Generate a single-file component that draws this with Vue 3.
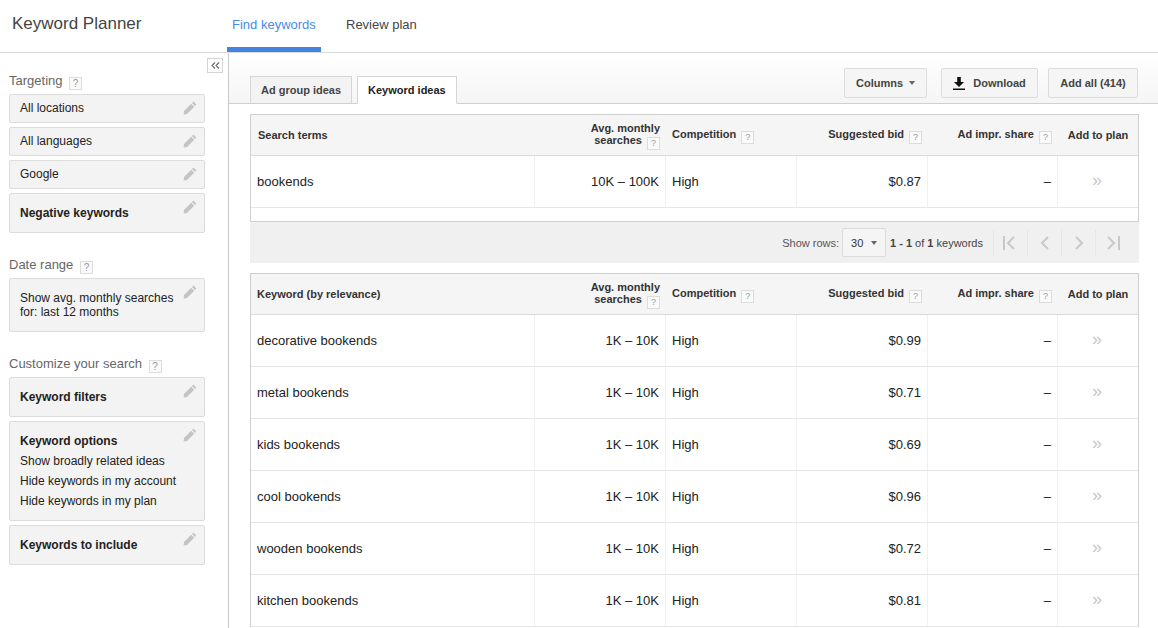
<template>
  <div class="page">
    <header class="topbar">
      <div class="brand">Keyword Planner</div>
      <nav class="nav">
        <a class="nav-item active">Find keywords</a>
        <a class="nav-item">Review plan</a>
      </nav>
    </header>

    <div class="body">
      <aside class="sidebar">
        <button class="collapse" aria-label="Collapse">
          <svg width="9" height="7" viewBox="0 0 9 7"><path d="M4 .5 1 3.5 4 6.5M8 .5 5 3.5 8 6.5" fill="none" stroke="#666" stroke-width="1.1"/></svg>
        </button>

        <div v-for="group in groups" :key="group.label" class="group">
          <div class="group-label">{{ group.label }} <span class="help">?</span></div>
          <div
            v-for="box in group.boxes"
            :key="box.title || box.text"
            class="box"
            :class="box.kind"
          >
            <strong v-if="box.title">{{ box.title }}</strong>
            <span v-if="box.text">{{ box.text }}</span>
            <span v-for="line in box.lines" :key="line" class="line">{{ line }}</span>
            <svg class="pencil" width="14" height="14" viewBox="0 0 14 14"><path d="M10.4.6 13.4 3.6 12 5 9 2ZM8.2 2.8l3 3L4 13 .6 13.4 1 10Z" fill="#c4c4c4"/></svg>
          </div>
        </div>
      </aside>

      <main class="content">
        <div class="tabbar">
          <div class="tabs">
            <div class="tab">Ad group ideas</div>
            <div class="tab selected">Keyword ideas</div>
          </div>
          <div class="actions">
            <button class="btn columns">Columns <i class="caret"></i></button>
            <button class="btn download">
              <svg width="12" height="13" viewBox="0 0 12 13"><path d="M4.2 0h3.6v5H11L6 10 1 5h3.2ZM0 11.6h12V13H0Z" fill="#111"/></svg>
              Download
            </button>
            <button class="btn addall">Add all (414)</button>
          </div>
        </div>

        <div class="tables">
          <section class="table first">
            <div class="row head">
              <div class="cell term-head search">Search terms</div>
              <div class="cell num avg">Avg. monthly<br />searches <span class="help">?</span></div>
              <div class="cell">Competition <span class="help">?</span></div>
              <div class="cell num">Suggested bid <span class="help">?</span></div>
              <div class="cell num">Ad impr. share <span class="help">?</span></div>
              <div class="cell plan-head">Add to plan</div>
            </div>
            <div class="row item">
              <div class="cell">bookends</div>
              <div class="cell num">10K – 100K</div>
              <div class="cell">High</div>
              <div class="cell num">$0.87</div>
              <div class="cell num dash">–</div>
              <div class="cell plan">»</div>
            </div>
            <div class="spacer"></div>
          </section>

          <div class="pager">
            <span class="show">Show rows:</span>
            <span class="rows">30 <i class="caret"></i></span>
            <span class="count"><b>1 - 1</b> of <b>1</b> keywords</span>
            <span v-for="(d, i) in pagerIcons" :key="i" class="page-btn">
              <svg width="18" height="16" viewBox="0 0 18 16"><path :d="d" fill="none" stroke="#c8c8c8" stroke-width="2"/></svg>
            </span>
          </div>

          <section class="table">
            <div class="row head">
              <div class="cell term-head">Keyword (by relevance)</div>
              <div class="cell num avg">Avg. monthly<br />searches <span class="help">?</span></div>
              <div class="cell">Competition <span class="help">?</span></div>
              <div class="cell num">Suggested bid <span class="help">?</span></div>
              <div class="cell num">Ad impr. share <span class="help">?</span></div>
              <div class="cell plan-head">Add to plan</div>
            </div>
            <div v-for="kw in keywords" :key="kw.name" class="row item">
              <div class="cell">{{ kw.name }}</div>
              <div class="cell num">1K – 10K</div>
              <div class="cell">High</div>
              <div class="cell num">{{ kw.bid }}</div>
              <div class="cell num dash">–</div>
              <div class="cell plan">»</div>
            </div>
          </section>
        </div>
      </main>
    </div>
  </div>
</template>

<script setup>
const groups = [
  {
    label: 'Targeting',
    boxes: [
      { text: 'All locations', kind: 'small' },
      { text: 'All languages', kind: 'small' },
      { text: 'Google', kind: 'small' },
      { title: 'Negative keywords', kind: 'tall' },
    ],
  },
  {
    label: 'Date range',
    boxes: [{ text: 'Show avg. monthly searches for: last 12 months', kind: 'date' }],
  },
  {
    label: 'Customize your search',
    boxes: [
      { title: 'Keyword filters', kind: 'tall' },
      {
        title: 'Keyword options',
        kind: 'options',
        lines: ['Show broadly related ideas', 'Hide keywords in my account', 'Hide keywords in my plan'],
      },
      { title: 'Keywords to include', kind: 'tall' },
    ],
  },
]

const keywords = [
  { name: 'decorative bookends', bid: '$0.99' },
  { name: 'metal bookends', bid: '$0.71' },
  { name: 'kids bookends', bid: '$0.69' },
  { name: 'cool bookends', bid: '$0.96' },
  { name: 'wooden bookends', bid: '$0.72' },
  { name: 'kitchen bookends', bid: '$0.81' },
]

const pagerIcons = [
  'M2 1v14M12 2 6 8l6 6',
  'M12 2 6 8l6 6',
  'M6 2l6 6-6 6',
  'M4 2l6 6-6 6M15 1v14',
]
</script>

<style>
html,
body {
  margin: 0;
  height: 100%;
  overflow: hidden;
  background: #fff;
}
</style>

<style scoped>
.page {
  width: 1158px;
  height: 628px;
  overflow: hidden;
  font-family: "Liberation Sans", Arial, sans-serif;
  color: #222;
  font-size: 12px;
}

.topbar {
  display: flex;
  height: 52px;
  border-bottom: 1px solid #d9d9d9;
  box-sizing: content-box;
}

.brand {
  width: 227px;
  padding: 14px 0 0 12px;
  box-sizing: border-box;
  font-size: 17px;
  line-height: 20px;
  color: #444;
}

.nav {
  display: flex;
}

.nav-item {
  padding: 17px 5px 0;
  width: 84px;
  box-sizing: content-box;
  height: 30px;
  font-size: 13px;
  line-height: 15px;
  color: #444;
  white-space: nowrap;
}

.nav-item.active {
  color: #4a8ae8;
  border-bottom: 5px solid #4285e0;
  margin-right: 20px;
}

.body {
  display: flex;
}

.sidebar {
  position: relative;
  width: 229px;
  height: 575px;
  padding: 20px 23px 0 9px;
  box-sizing: border-box;
  border-right: 1px solid #c9c9c9;
  flex: none;
}

.collapse {
  position: absolute;
  top: 5px;
  left: 207px;
  width: 16px;
  height: 15px;
  padding: 0;
  background: #fff;
  border: 1px solid #d4d4d4;
  display: flex;
  align-items: center;
  justify-content: center;
}

.group {
  margin-bottom: 24px;
}

.group-label {
  height: 21px;
  font-size: 13px;
  line-height: 16px;
  color: #666;
  white-space: nowrap;
}

.help {
  display: inline-block;
  width: 11px;
  height: 11px;
  margin-left: 3px;
  border: 1px solid #dcdcdc;
  background: #fafafa;
  color: #999;
  font-size: 10px;
  font-weight: 400;
  line-height: 11px;
  text-align: center;
  vertical-align: -2px;
}

.box {
  position: relative;
  width: 196px;
  margin-bottom: 4px;
  padding: 0 10px;
  box-sizing: border-box;
  background: #f3f3f3;
  border: 1px solid #dcdcdc;
  border-radius: 2px;
  line-height: 14px;
  color: #222;
}

.box strong {
  display: block;
  font-weight: 700;
}

.box.small {
  height: 29px;
  padding-top: 6px;
}

.box.tall {
  height: 40px;
  padding-top: 12px;
}

.box.date {
  height: 54px;
  margin-bottom: 0;
  padding: 12px 24px 0 10px;
}

.box.options {
  height: 100px;
  padding-top: 12px;
}

.line {
  display: block;
  margin-top: 6px;
}

.pencil {
  position: absolute;
  top: 6px;
  right: 7px;
}

.content {
  flex: 1;
  min-width: 0;
}

.tabbar {
  display: flex;
  justify-content: space-between;
  height: 50px;
  padding: 0 21px;
  background: linear-gradient(#fff, #f5f5f5);
  border-bottom: 1px solid #d0d0d0;
}

.tabs {
  display: flex;
  align-items: flex-start;
  gap: 5px;
  padding-top: 23px;
}

.tab {
  height: 26px;
  padding: 0 10px;
  border: 1px solid #d6d6d6;
  border-bottom: 0;
  background: #f3f3f3;
  font-size: 11px;
  font-weight: 700;
  line-height: 27px;
  color: #444;
}

.tab.selected {
  background: #fff;
  color: #222;
  border-bottom: 1px solid #fff;
}

.actions {
  display: flex;
  gap: 14px;
  padding-top: 15px;
  margin-right: -1px;
}

.actions .btn:last-child {
  margin-left: -4px;
}

.btn {
  height: 30px;
  padding: 0 6px;
  border: 1px solid #dcdcdc;
  border-radius: 2px;
  background: #f5f5f5;
  font: 700 11px "Liberation Sans", Arial, sans-serif;
  color: #444;
  display: flex;
  align-items: center;
  justify-content: center;
  gap: 6px;
  box-sizing: border-box;
  white-space: nowrap;
}

.columns {
  width: 83px;
}

.download {
  width: 97px;
  gap: 8px;
}

.addall {
  width: 90px;
}

.caret {
  display: inline-block;
  width: 0;
  height: 0;
  border-left: 3.5px solid transparent;
  border-right: 3.5px solid transparent;
  border-top: 4px solid #666;
}

.tables {
  padding: 10px 19px 0 21px;
}

.table {
  width: 889px;
  box-sizing: border-box;
  border: 1px solid #cfcfcf;
  border-bottom: 0;
}

.table.first {
  border-bottom: 1px solid #cfcfcf;
}

.spacer {
  height: 13px;
}

.row {
  display: grid;
  grid-template-columns: 283px 131px 131px 131px 130px 81px;
}

.head {
  height: 41px;
  background: #f5f5f5;
  border-bottom: 1px solid #dadada;
  box-sizing: border-box;
  font-size: 11px;
  font-weight: 700;
  color: #333;
}

.item {
  height: 52px;
  box-sizing: border-box;
  border-bottom: 1px solid #e6e6e6;
  font-size: 13px;
}

.cell {
  padding: 0 6px;
  line-height: 51px;
  border-left: 1px solid #f0f0f0;
  box-sizing: border-box;
  white-space: nowrap;
}

.cell:first-child {
  border-left: 0;
}

.head .cell {
  border: 0;
  padding-left: 7px;
  padding-right: 5px;
  line-height: 39px;
}

.head .avg {
  padding-top: 7px;
  line-height: 12px;
}

.head .help {
  margin-left: 2px;
  font-size: 9px;
}

.head .term-head {
  padding-left: 6px;
  line-height: 41px;
}

.head .term-head.search {
  padding-left: 7px;
}

.num {
  text-align: right;
}

.dash {
  color: #222;
}

.plan {
  text-align: center;
  color: #c8c8c8;
  font-size: 18px;
  line-height: 49px;
  padding: 0 2px 0 0;
}

.head .plan-head {
  text-align: center;
  padding: 0 0 0 1px;
  line-height: 41px;
}

.pager {
  display: flex;
  align-items: center;
  justify-content: flex-end;
  width: 889px;
  height: 41px;
  margin-bottom: 10px;
  padding-right: 10px;
  box-sizing: border-box;
  background: #f0f0f0;
  font-size: 11px;
  color: #555;
}

.rows {
  display: flex;
  align-items: center;
  justify-content: space-between;
  width: 44px;
  height: 29px;
  margin: 0 4px 0 3px;
  padding: 0 8px;
  box-sizing: border-box;
  border: 1px solid #dcdcdc;
  border-radius: 2px;
  background: #f5f5f5;
  color: #333;
}

.count {
  margin-right: 10px;
  color: #444;
}

.page-btn {
  display: flex;
  align-items: center;
  justify-content: center;
  width: 33px;
  height: 26px;
  border-left: 1px solid #e6e6e6;
}
</style>
